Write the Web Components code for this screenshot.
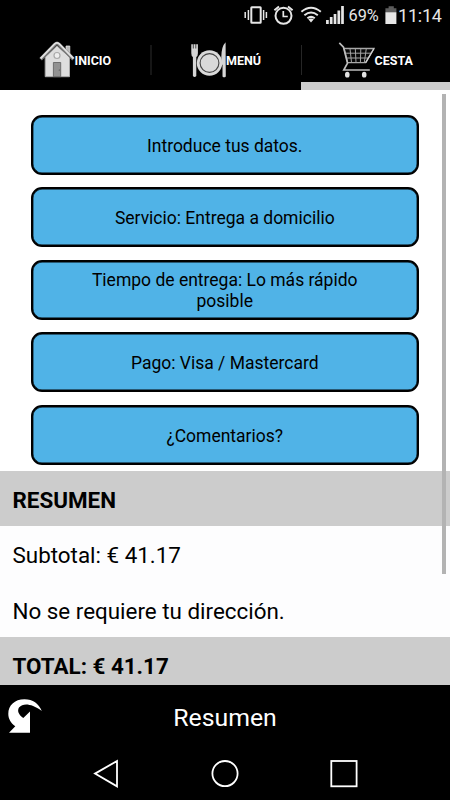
<!DOCTYPE html>
<html lang="es">
<head>
<meta charset="utf-8">
<title>Cesta</title>
<style>
html,body{margin:0;background:#000}
body{width:450px;height:800px;overflow:hidden;font-family:Roboto,"Noto Sans",sans-serif;color:#000}
</style>
</head>
<body>
<order-app></order-app>
<script>
const define = (name, html) => customElements.define(name, class extends HTMLElement {
  constructor() {
    super();
    const t = document.createElement('template');
    t.innerHTML = html;
    this.attachShadow({mode: 'open'}).append(t.content.cloneNode(true));
  }
});

define('status-bar', `
<style>
:host{display:flex;box-sizing:border-box;height:34px;padding-left:244px;color:#e6e6e6;background:#000}
svg{display:block;flex:none;width:104px;height:34px}
.pct{width:35px;font-size:16.3px;line-height:32px;padding-left:.5px}
.bat{width:14px}
.time{font-size:18px;line-height:32px;padding-left:.6px;letter-spacing:-.25px}
</style>
<svg viewBox="244 0 104 34" fill="none" stroke="#e6e6e6">
  <rect x="251.3" y="7.3" width="9.4" height="15.4" rx=".5" stroke-width="2"/>
  <path d="M248.4 10v10M245.2 12v6M263.6 10v10M266.4 12v6" stroke-width="1.5"/>
  <circle cx="283.5" cy="15.8" r="8" stroke-width="2"/>
  <path d="M283.3 11v5.5h4.5" stroke-width="1.7"/>
  <path d="M274.4 10.2l4.6-3.8M292.6 10.2l-4.6-3.8" stroke-width="2"/>
  <path d="M301.4 11.8Q311 3.8 320.8 11.8M304.4 15.2Q311 9.8 317.8 15.2M307.4 18.3Q311 15.4 314.8 18.3" stroke-width="2"/>
  <path d="M308.3 19.3Q311 17.5 313.8 19.3L311 22.4z" fill="#e6e6e6" stroke="none"/>
  <path d="M327.4 20v4M331.2 17v7M335 14v10M338.8 10.5v13.5M342.5 6v18" stroke-width="2.7"/>
</svg>
<span class="pct">69%</span>
<svg class="bat" viewBox="383 0 14 34"><path d="M384.4 8.3h3.2V6.3h5.2v2h2.6v4h-11z" fill="#5c5c5c"/><path d="M384.4 12.2h11V24h-11z" fill="#e6e6e6"/></svg>
<span class="time">11:14</span>`);

define('tab-item', `
<style>
:host{display:flex;box-sizing:border-box;align-items:flex-start;height:56px;border-bottom:8px solid #000;color:#fff;font-weight:700;font-size:12.5px;line-height:54px}
:host([active]){border-bottom-color:#ccc}
::slotted(svg){display:block;flex:none;height:48px}
</style>
<slot name="icon"></slot><span><slot></slot></span>`);

define('tab-bar', `
<style>
:host{display:grid;grid-template-columns:150px 151px 149px;height:56px;background:#000}
</style>
<tab-item>
  <svg slot="icon" width="74.5" viewBox="0 34 74.5 48">
    <path d="M66 46h3.8v12l-3.8-3z" fill="#b9b9b9" stroke="#eee" stroke-width=".7"/>
    <path d="M45.2 57L57 46l12.5 11v19.7H45.2z" fill="#dedede" stroke="#a8a8a8" stroke-width="1"/>
    <path d="M40.6 59.2L55 44.4q2-2 4 0l14.5 14.8" fill="none" stroke="#777" stroke-width="3.6"/>
    <path d="M40.6 58.5L55 43.7q2-1.5 4 0l14.5 14.8" fill="none" stroke="#e2e2e2" stroke-width="1.8"/>
    <circle cx="57" cy="55.5" r="3" fill="#eee" stroke="#aaa" stroke-width="1.2"/>
    <path d="M53.4 62.5h7.3v14.2h-7.3z" fill="#929292" stroke="#666" stroke-width=".9"/>
    <circle cx="59.3" cy="70" r=".6" fill="#444"/>
  </svg>INICIO</tab-item>
<tab-item>
  <svg slot="icon" width="76" viewBox="150 34 76 48">
    <path d="M151 45v30" stroke="#262626" stroke-width="1.2"/>
    <path d="M191.3 44.3v9q0 3 1.6 3.6V76q1.7 2 3.4 0V56.9q1.6-.6 1.6-3.6v-9" fill="#d6d6d6"/>
    <path d="M193.3 44v4.5M195.8 44v4.5" stroke="#222" stroke-width=".8"/>
    <circle cx="209.5" cy="63" r="12.7" fill="#d9d9d9"/>
    <circle cx="209.5" cy="63" r="9.4" fill="#d9d9d9" stroke="#444" stroke-width="1.1"/>
    <path d="M225.6 42.3q-4.2 4-4.3 15v7.5h1.2v11.6q1.6 1.8 3.3 0z" fill="#d6d6d6"/>
  </svg>MENÚ</tab-item>
<tab-item active>
  <svg slot="icon" width="73.5" viewBox="301 34 73.5 48">
    <path d="M301.4 45v30" stroke="#262626" stroke-width="1.2"/>
    <path d="M344 48.5h30l-8.3 14.2h-18z" fill="#080808" stroke="#a8a8a8" stroke-width="1.3"/>
    <path d="M345 53.2h26M346.3 58h22M350 48.5l1.5 14M355.3 48.5l.7 14M360.8 48.5l-.4 14M366.3 48.5l-2 14" stroke="#a4a4a4" stroke-width="1"/>
    <path d="M339.3 42.8l4.2 4.3 4 16-3.7 6.9h26" fill="none" stroke="#bdbdbd" stroke-width="1.7"/>
    <path d="M374 48.5l-8.3 14.2" stroke="#d0d0d0" stroke-width="1.3"/>
    <ellipse cx="347.3" cy="74.7" rx="2.3" ry="2.9" fill="#e2e2e2"/><ellipse cx="364.2" cy="74.7" rx="2.3" ry="2.9" fill="#e2e2e2"/>
  </svg>CESTA</tab-item>`);

define('option-button', `
<style>
:host{display:flex;box-sizing:border-box;height:59.8px;border:2px solid #000;box-shadow:inset 0 0 0 .4px #000;border-radius:11px;background:#50b3e7;align-items:center;justify-content:center;text-align:center;padding:2px 45px 0;font-size:17.5px;line-height:20.5px}
</style><span><slot></slot></span>`);

define('summary-row', `
<style>
:host{display:block;box-sizing:border-box;height:55.4px;padding-left:12.5px;font-size:22.4px;line-height:58.4px;background:#fdfdfe;white-space:nowrap}
:host([heading]){background:#ccc;font-weight:700}
</style><slot></slot>`);

define('order-panel', `
<style>
:host{display:block;position:relative;height:595px;overflow:hidden;background:#fff}
.opts{display:grid;row-gap:12.7px;padding:25px 31.5px 6.3px 31px}
.thumb{position:absolute;right:4px;top:4px;width:4px;height:480px;background:#b3b3b3}
</style>
<div class="opts">
<option-button>Introduce tus datos.</option-button>
<option-button>Servicio: Entrega a domicilio</option-button>
<option-button>Tiempo de entrega: Lo más rápido posible</option-button>
<option-button>Pago: Visa / Mastercard</option-button>
<option-button>¿Comentarios?</option-button>
</div>
<summary-row heading>RESUMEN</summary-row>
<summary-row>Subtotal: € 41.17</summary-row>
<summary-row>No se requiere tu dirección.</summary-row>
<summary-row heading>TOTAL: € 41.17</summary-row>
<div class="thumb"></div>`);

define('title-bar', `
<style>
:host{display:grid;grid-template-columns:50px 1fr 50px;height:63px;background:#000;color:#fff;font-size:24.8px;line-height:65px;text-align:center}
svg{display:block}
</style>
<svg width="50" height="63" viewBox="0 685 50 63"><path d="M9 732.8H30V711.5L23.3 718C18.5 714.5 17 711 19 707.5C23.5 703 31 703.5 41.8 711C38.5 703.5 33 699.3 24.5 699.3C14.5 699.3 8.3 705.5 8.3 713.8C8.3 719 10.8 723 15.3 726.3Z" fill="#fff"/></svg>
<span><slot></slot></span>`);

define('nav-bar', `
<style>
:host{display:block;height:52px;background:#000}
svg{display:block}
</style>
<svg width="450" height="52" viewBox="0 748 450 52" fill="none" stroke="#fff" stroke-width="1.8">
<path d="M95 773.6L117 761v25.4z"/><circle cx="225" cy="773.6" r="12.6"/><rect x="331.3" y="761" width="25.3" height="25.3"/>
</svg>`);

define('order-app', `
<style>:host{display:flex;flex-direction:column;width:450px;height:800px;overflow:hidden}</style>
<status-bar></status-bar><tab-bar></tab-bar><order-panel></order-panel><title-bar>Resumen</title-bar><nav-bar></nav-bar>`);
</script>
</body>
</html>
